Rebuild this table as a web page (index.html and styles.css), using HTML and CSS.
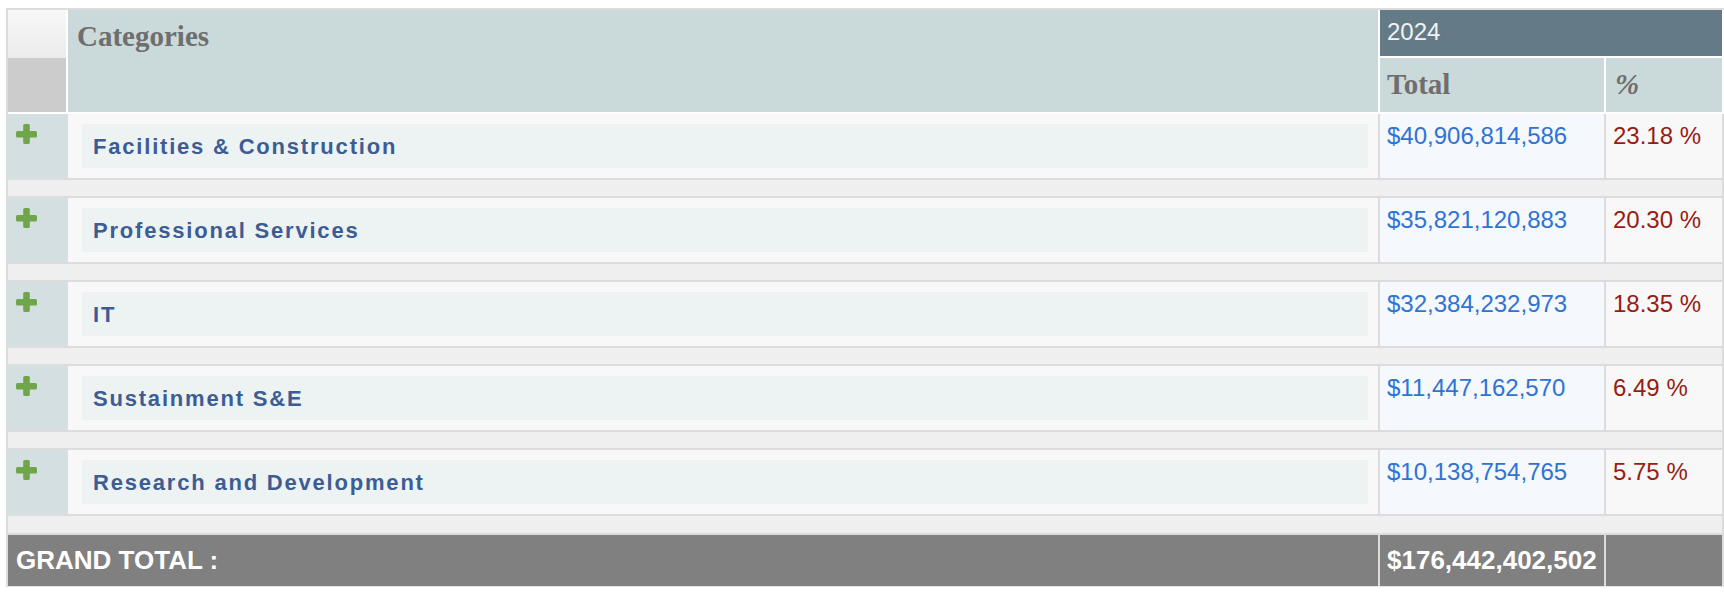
FILE: index.html
```html
<!DOCTYPE html>
<html lang="en">
<head>
<meta charset="utf-8">
<title>Categories 2024</title>
<link rel="stylesheet" href="styles.css">
</head>
<body>
<table class="report">
  <colgroup>
    <col class="c-exp">
    <col class="c-cat">
    <col class="c-total">
    <col class="c-pct">
  </colgroup>
  <thead>
    <tr class="head-1">
      <th class="corner corner-top"></th>
      <th class="cat-head" rowspan="2">Categories</th>
      <th class="year" colspan="2">2024</th>
    </tr>
    <tr class="head-2">
      <th class="corner corner-bottom"></th>
      <th class="sub">Total</th>
      <th class="sub pct-head">%</th>
    </tr>
  </thead>
  <tbody>
    <tr class="row">
      <td class="exp"><svg class="plus" viewBox="0 0 21 20" width="21" height="20"><rect x="0" y="7" width="21" height="6.5" rx="1.5"/><rect x="7.2" y="0" width="6.6" height="20" rx="1.5"/></svg></td>
      <td class="cat"><div class="label">Facilities &amp; Construction</div></td>
      <td class="total">$40,906,814,586</td>
      <td class="pct">23.18 %</td>
    </tr>
    <tr class="gap"><td colspan="4"></td></tr>
    <tr class="row">
      <td class="exp"><svg class="plus" viewBox="0 0 21 20" width="21" height="20"><rect x="0" y="7" width="21" height="6.5" rx="1.5"/><rect x="7.2" y="0" width="6.6" height="20" rx="1.5"/></svg></td>
      <td class="cat"><div class="label">Professional Services</div></td>
      <td class="total">$35,821,120,883</td>
      <td class="pct">20.30 %</td>
    </tr>
    <tr class="gap"><td colspan="4"></td></tr>
    <tr class="row">
      <td class="exp"><svg class="plus" viewBox="0 0 21 20" width="21" height="20"><rect x="0" y="7" width="21" height="6.5" rx="1.5"/><rect x="7.2" y="0" width="6.6" height="20" rx="1.5"/></svg></td>
      <td class="cat"><div class="label">IT</div></td>
      <td class="total">$32,384,232,973</td>
      <td class="pct">18.35 %</td>
    </tr>
    <tr class="gap"><td colspan="4"></td></tr>
    <tr class="row">
      <td class="exp"><svg class="plus" viewBox="0 0 21 20" width="21" height="20"><rect x="0" y="7" width="21" height="6.5" rx="1.5"/><rect x="7.2" y="0" width="6.6" height="20" rx="1.5"/></svg></td>
      <td class="cat"><div class="label">Sustainment S&amp;E</div></td>
      <td class="total">$11,447,162,570</td>
      <td class="pct">6.49 %</td>
    </tr>
    <tr class="gap"><td colspan="4"></td></tr>
    <tr class="row">
      <td class="exp"><svg class="plus" viewBox="0 0 21 20" width="21" height="20"><rect x="0" y="7" width="21" height="6.5" rx="1.5"/><rect x="7.2" y="0" width="6.6" height="20" rx="1.5"/></svg></td>
      <td class="cat"><div class="label">Research and Development</div></td>
      <td class="total">$10,138,754,765</td>
      <td class="pct">5.75 %</td>
    </tr>
    <tr class="gap gap-last"><td colspan="4"></td></tr>
  </tbody>
  <tfoot>
    <tr class="grand">
      <td class="grand-label" colspan="2">GRAND TOTAL :</td>
      <td class="grand-total">$176,442,402,502</td>
      <td class="grand-pct"></td>
    </tr>
  </tfoot>
</table>
</body>
</html>
```
FILE: styles.css
```css
html, body {
  margin: 0;
  padding: 0;
  background: #ffffff;
}

body {
  padding: 8px 0 0 6px;
  font-family: "Liberation Sans", Arial, sans-serif;
}

.report {
  table-layout: fixed;
  width: 1718px;
  border-collapse: separate;
  border-spacing: 0;
  border-top: 2px solid #dcdcdc;
  border-left: 2px solid #dcdcdc;
}

.c-exp { width: 60px; }
.c-cat { width: 1312px; }
.c-total { width: 226px; }
.c-pct { width: 118px; }

.report th,
.report td {
  padding: 0;
  box-sizing: border-box;
}

/* header */
.report thead th {
  background: #cad9da;
  border-right: 2px solid #ffffff;
  border-bottom: 2px solid #ffffff;
  text-align: left;
  vertical-align: top;
  font-family: "Liberation Serif", "Times New Roman", serif;
  font-weight: bold;
  font-size: 29px;
  color: #6e6e6e;
}

.head-1 { height: 48px; }
.head-2 { height: 56px; }

.report thead th.corner-top {
  background: linear-gradient(#f8f8f8, #ebebeb);
  border-bottom: 0;
}

.report thead th.corner-bottom {
  background: #cccccc;
}

.report thead th.cat-head {
  padding: 10px 9px;
}

.report thead th.year {
  background: #657a87;
  color: #f2f2f2;
  font-family: "Liberation Sans", Arial, sans-serif;
  font-weight: normal;
  font-size: 24px;
  vertical-align: middle;
  padding: 0 7px 2px;
}

.report thead th.sub {
  padding: 10px 7px 0;
}

.report thead th.pct-head {
  font-style: italic;
  padding-left: 9px;
}

/* body rows */
.row { height: 66px; }

.row td {
  border-right: 2px solid #dcdcdc;
  border-bottom: 2px solid #dcdcdc;
  vertical-align: top;
  font-size: 24px;
}

.row td.exp {
  background: #d4dfe1;
  border-right: 0;
  padding: 10px 0 0 8px;
}

.plus {
  display: block;
  fill: #70a64b;
}

.row td.cat {
  background: #f8f8f8;
  padding: 10px 10px 10px 14px;
}

.label {
  height: 44px;
  display: flex;
  align-items: center;
  padding: 2px 11px 0;
  box-sizing: border-box;
  background: #edf2f3;
  color: #3c5d94;
  font-weight: bold;
  font-size: 22px;
  letter-spacing: 1.8px;
}

.row td.total {
  background: #f5f8fd;
  color: #2f73d4;
  padding: 8px 7px 0;
}

.row td.pct {
  background: #f8f8f8;
  color: #991b12;
  padding: 8px 7px 0;
}

.gap { height: 18px; }
.gap-last { height: 19px; }

.gap td {
  background: #efefef;
  border-right: 2px solid #dcdcdc;
  border-bottom: 2px solid #dcdcdc;
}

/* grand total */
.grand { height: 52px; }

.grand td {
  background: #808080;
  color: #ffffff;
  font-weight: bold;
  font-size: 26px;
  border-right: 2px solid #dcdcdc;
  border-bottom: 1px solid #e4e4e4;
  vertical-align: middle;
  white-space: nowrap;
}

.grand td.grand-label {
  padding: 0 8px;
}

.grand td.grand-total {
  padding: 0 7px;
}
```
